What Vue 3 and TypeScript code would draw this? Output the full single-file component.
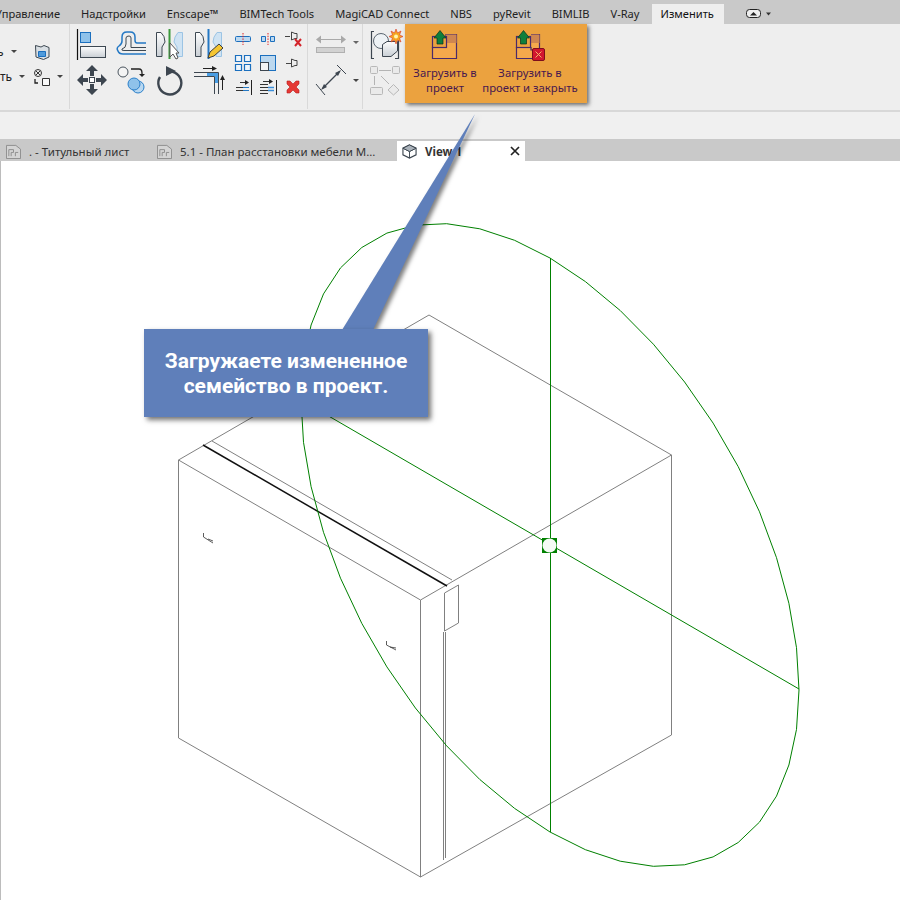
<template>
  <div class="app">
    <div class="menu-bar">
      <span
        v-for="tab in menuTabs"
        :key="tab"
        class="menu-bar__tab"
        :class="{ 'menu-bar__tab--active': tab === 'Изменить' }"
      >{{ tab }}</span>
      <svg class="menu-bar__toggle" viewBox="0 0 26 10">
        <rect x="0.5" y="0.5" width="14" height="8" rx="3" fill="#eee" stroke="#222" />
        <path d="M4 6.5 7.5 3 11 6.5Z" fill="#222" />
        <path d="M20 3.5h5l-2.5 3Z" fill="#333" />
      </svg>
    </div>

    <div class="ribbon">
      <div class="group group--start">
        <div class="start-row start-row--one">
          <span class="start-row__label start-row__label--one">ь</span>
          <i class="caret"></i>
          <svg class="start-row__icon" viewBox="34 42 16 16">
            <path d="M35.500 43.500 41 45 44 43.500 49 45.500V55L43.500 57.500 36 55Z" fill="#d9dfe4" stroke="#3d4852" />
            <path d="M38.500 49.500H45.500V54.500H38.500Z" fill="#4f9bdc" stroke="#1b6fbe" />
          </svg>
        </div>
        <div class="start-row start-row--two">
          <span class="start-row__label start-row__label--two">ть</span>
          <i class="caret"></i>
          <svg class="start-row__icon start-row__icon--wide" viewBox="33 66 18 18">
            <circle cx="38" cy="71" r="3.500" fill="#eee" stroke="#333" />
            <path d="M36 69 40 73M40 69 36 73" stroke="#333" />
            <path d="M35 77V81H38" fill="none" stroke="#222" stroke-width="1.300" />
            <path d="M42.500 76.500H49.500V83.500H42.500Z" fill="#fafafa" stroke="#333" />
          </svg>
          <i class="caret"></i>
        </div>
      </div>

      <div class="group group--modify">
        <div class="large-grid">
          <svg class="lg" viewBox="76 28 39 35">
            <defs>
              <linearGradient id="steel" x1="0" y1="0" x2="0" y2="1">
                <stop offset="0" stop-color="#fdfdfd" />
                <stop offset="1" stop-color="#c9cfd5" />
              </linearGradient>
            </defs>
            <path d="M77.500 29V60" stroke="#111" stroke-width="1.200" />
            <rect x="80.500" y="32.500" width="10" height="10" fill="#8fc2ea" stroke="#1b6fbe" />
            <rect x="80.500" y="46.500" width="25" height="11" fill="url(#steel)" stroke="#3d4852" />
          </svg>
          <svg class="lg" viewBox="115 28 39 35">
            <path d="M146 43H137Q135 43 135 40V37Q135 32 130 32H127Q122 32 122 37V41Q122 44 119 46Q116 48 118 51Q119 54 123 54H146" fill="none" stroke="#2478c4" stroke-width="1.500" />
            <path d="M146 47.500H131V38Q131 36 129 36Q126 36 126 38V44Q126 48 122 49Q121 50.500 124 50.500H146" fill="none" stroke="#3d4852" />
          </svg>
          <svg class="lg" viewBox="154 28 39 35">
            <path d="M156.500 32.500H161Q165 36 165 42L162 47V56.500H156.500Z" fill="url(#steel)" stroke="#3d4852" />
            <path d="M169.500 29V59" stroke="#3c9a3c" stroke-width="2" />
            <path d="M182.500 32.500H178Q174 37 174 42L177 47V56.500H182.500Z" fill="#cfe3f3" stroke="#9cc4e4" />
            <path d="M170 43V57L173 54 176 59 178 58 176 53H179Z" fill="#fff" stroke="#555" />
          </svg>
          <svg class="lg" viewBox="193 28 39 35">
            <path d="M195.500 32.500H200Q204 36 204 42L201 47V56.500H195.500Z" fill="url(#steel)" stroke="#3d4852" />
            <path d="M208.500 29V59" stroke="#2478c4" stroke-width="2" />
            <path d="M221.500 32.500H217Q213 37 213 42L216 47V56.500H221.500Z" fill="#cfe3f3" stroke="#9cc4e4" />
            <path d="M208 58 210 52 219 44 223 48 214 56Z" fill="#f4c531" stroke="#3d3d3d" />
          </svg>
          <svg class="lg" viewBox="76 63 39 35">
            <path d="M92 65 98 71H94V76H90V71H86ZM92 95 86 89H90V84H94V89H98ZM77 80 83 74V78H88V82H83V86ZM107 80 101 86V82H96V78H101V74Z" fill="#3d4650" />
            <rect x="89.500" y="77.500" width="5" height="5" fill="#fff" stroke="#3d4650" />
          </svg>
          <svg class="lg" viewBox="115 63 39 35">
            <circle cx="123" cy="72" r="5" fill="#f4f4f4" stroke="#4a545e" />
            <path d="M131 69H139Q142 69 142 73V75" fill="none" stroke="#222" stroke-width="1.300" />
            <path d="M139 74H145L142 77Z" fill="#222" />
            <circle cx="138" cy="87" r="6" fill="#b9d8f1" stroke="#2a7fc9" />
            <circle cx="134" cy="84" r="6" fill="#8fc2ea" stroke="#2a7fc9" />
          </svg>
          <svg class="lg" viewBox="154 63 39 35">
            <path d="M170 71.500A11.500 11.500 0 1 1 160 77" fill="none" stroke="#3d4650" stroke-width="2.400" />
            <path d="M166 66 176 71 166 76Z" fill="#3d4650" />
          </svg>
          <svg class="lg" viewBox="193 63 39 35">
            <path d="M194 72.500H218.500V94M194 76.500H214.500V94" fill="none" stroke="#3d4650" />
            <path d="M203 68.500H213M222.500 90V79" stroke="#222" />
            <path d="M212 66 217 68.500 212 71ZM220 80 222.500 75 225 80Z" fill="#222" />
            <path d="M207 74.500H216.500V83" fill="none" stroke="#4a9ee4" stroke-width="3" />
          </svg>
        </div>
        <div class="small-grid">
          <svg class="sm" viewBox="232 27 25 24">
            <rect x="235.500" y="36.500" width="15" height="5" rx="1" fill="#bcd8ef" stroke="#1b6fbe" />
            <path d="M243 33V45" stroke="#d22" stroke-dasharray="1.500 1.200" />
          </svg>
          <svg class="sm" viewBox="257 27 25 24">
            <path d="M261.500 36.500H265.500V41.500H261.500ZM270.500 36.500H274.500V41.500H270.500Z" fill="#bcd8ef" stroke="#1b6fbe" />
            <path d="M268 33V45" stroke="#d22" stroke-dasharray="1.500 1.200" />
          </svg>
          <svg class="sm" viewBox="282 27 25 24">
            <path d="M285 36.500H290M291.500 32 295 33.500H297V38.500H295L291.500 40Z" fill="#eee" stroke="#444" />
            <path d="M295 39 301 46M301 39 295 46" stroke="#d3232a" stroke-width="2" />
          </svg>
          <svg class="sm" viewBox="232 51 25 24">
            <path d="M235.500 55.500H241.500V61.500H235.500ZM244.500 55.500H250.500V61.500H244.500ZM235.500 64.500H241.500V70.500H235.500ZM244.500 64.500H250.500V70.500H244.500Z" fill="#eef5fb" stroke="#1b6fbe" stroke-width="1.200" />
          </svg>
          <svg class="sm" viewBox="257 51 25 24">
            <rect x="260.500" y="55.500" width="15" height="15" fill="#bcd8ef" stroke="#1b6fbe" />
            <rect x="260.500" y="62.500" width="8" height="8" fill="#f4f4f4" stroke="#3d4650" />
          </svg>
          <svg class="sm" viewBox="282 51 25 24">
            <path d="M286 63.500H291M291.500 59 295 60.500H297V65.500H295L291.500 67Z" fill="#eee" stroke="#444" />
          </svg>
          <svg class="sm" viewBox="232 75 25 24">
            <path d="M236 87.500H243M236 90.500H243M240 82.500H246" stroke="#333" />
            <path d="M243 87.500H249M243 90.500H249" stroke="#2478c4" />
            <path d="M245 80 249 82.500 245 85Z" fill="#222" />
            <path d="M251.500 80V95" stroke="#222" />
          </svg>
          <svg class="sm" viewBox="257 75 25 24">
            <path d="M260 84.500H268M260 87.500H268M260 90.500H268M260 93.500H268M263 81.500H270" stroke="#333" />
            <path d="M268 87.500H274M268 90.500H274" stroke="#3a8fdc" stroke-width="1.500" />
            <path d="M269 79 273 81.500 269 84Z" fill="#222" />
            <path d="M276.500 80V95" stroke="#222" />
          </svg>
          <svg class="sm" viewBox="282 75 25 24">
            <path d="M287 81H290L293 84 296 81H299V84L296 87 299 90V93H296L293 90 290 93H287V90L290 87 287 84Z" fill="#e53935" stroke="#b71c1c" stroke-width="0.600" />
          </svg>
        </div>
      </div>

      <div class="group group--measure">
        <div class="measure-row">
          <svg class="measure-row__icon" viewBox="314 30 33 24">
            <path d="M317 39.500H343" stroke="#a9a9a9" />
            <path d="M315 39.500 320 35.500V43.500ZM345 39.500 340 35.500V43.500Z" fill="#a9a9a9" />
            <rect x="315.500" y="47.500" width="28" height="5" fill="#d2d2d2" stroke="#b0b0b0" />
          </svg>
          <i class="caret caret--dim"></i>
        </div>
        <div class="measure-row">
          <svg class="measure-row__icon" viewBox="314 64 33 32">
            <path d="M322 88 338 72" stroke="#3d4650" stroke-width="1.200" />
            <path d="M320 90 323 84 326 87ZM340 70 334 73 337 76Z" fill="#3d4650" />
            <path d="M315 84 324 95M336 65 345 74" stroke="#3d4650" />
          </svg>
          <i class="caret"></i>
        </div>
      </div>

      <div class="group group--create">
        <svg class="create-icon" viewBox="369 28 34 34">
          <path d="M374 31.500H371.500V58.500H374M398.500 38V58.500H395" fill="none" stroke="#3d4650" stroke-width="1.200" />
          <circle cx="381" cy="41" r="7.500" fill="#eef2f5" stroke="#5b6670" />
          <path d="M382.500 44.500 387 41.500H397.500V51L391 56.500H382.500Z" fill="url(#steel)" stroke="#3d4650" />
          <path d="M396 29 397.500 33 401 31 399.500 35 403 36.500 399.500 38 401 42 397.500 40 396 44 394.500 40 391 42 392.500 38 389 36.500 392.500 35 391 31 394.500 33Z" fill="#f6a821" stroke="#d9362b" stroke-width="0.600" />
          <circle cx="396" cy="36.500" r="2" fill="#fff7b0" />
        </svg>
        <svg class="create-icon" viewBox="369 63 34 34">
          <g fill="#eaeaea" stroke="#b8b8b8">
            <rect x="370.500" y="66.500" width="7" height="7" rx="1" />
            <rect x="392.500" y="66.500" width="7" height="7" rx="1" />
            <rect x="370.500" y="87.500" width="12" height="7" rx="1" />
            <path d="M393.500 84.500 399 90 393.500 95 388 90Z" />
          </g>
          <path d="M379 70.500H391M374.500 76V85M381 76 389 84" stroke="#b4b4b4" />
        </svg>
      </div>

      <div class="load-panel">
        <button class="load-btn load-btn--first">
          <svg class="load-btn__icon" viewBox="430 30 30 31">
            <path d="M446 34.500H456.500V58.500H432.500V47.500H446Z" fill="#f5a94c" stroke="#4a2a6a" stroke-width="1.200" />
            <path d="M446 34.500H456.500V43H446Z" fill="#cf8650" />
            <rect x="432.500" y="36.500" width="14" height="11" fill="#eba23f" stroke="#4a2a6a" stroke-width="1.200" />
            <path d="M440 30.500 446 38H443V44H437V38H434Z" fill="#0f7f3c" stroke="#08321c" stroke-width="0.700" />
          </svg>
          <span>Загрузить в<br />проект</span>
        </button>
        <button class="load-btn load-btn--second">
          <svg class="load-btn__icon" viewBox="514 30 33 33">
            <path d="M531 34.500H539.500V50H531V47.500H516.500V58.500H533" fill="#f5a94c" stroke="#4a2a6a" stroke-width="1.200" />
            <path d="M531 34.500H539.500V43H531Z" fill="#cf8650" />
            <rect x="516.500" y="36.500" width="14" height="11" fill="#eba23f" stroke="#4a2a6a" stroke-width="1.200" />
            <path d="M523.500 30.500 529.500 38H526.500V44H520.500V38H517.500Z" fill="#0f7f3c" stroke="#08321c" stroke-width="0.700" />
            <rect x="532.500" y="48.500" width="12" height="12" rx="1.500" fill="#d2152f" stroke="#7d0d1c" />
            <path d="M535.500 51.500 541.500 57.500M541.500 51.500 535.500 57.500" stroke="#f4b26a" />
          </svg>
          <span>Загрузить в<br />проект и закрыть</span>
        </button>
      </div>
    </div>

    <div class="spacer"></div>

    <div class="view-tabs">
      <div v-for="sheet in sheetTabs" :key="sheet.title" class="view-tab" :style="{ width: sheet.width + 'px' }">
        <svg class="view-tab__icon" viewBox="0 0 16 16">
          <path d="M.5 1.500H10.500L15.500 5.500V15.500H.5Z" fill="#d4d4d4" stroke="#8c8c8c" />
          <path d="M3 13V6H8V9H5.500V13M10 13V9H13" fill="none" stroke="#8c8c8c" />
        </svg>
        <span>{{ sheet.title }}</span>
      </div>
      <div class="view-tab view-tab--active">
        <svg class="view-tab__icon" viewBox="0 0 16 16">
          <path d="M8 1 15 4.500V11.500L8 15 1 11.500V4.500Z" fill="#fff" stroke="#3d4650" stroke-width="1.200" />
          <path d="M1 4.500 8 8 15 4.500M8 8V15" fill="none" stroke="#3d4650" />
          <path d="M8 1 15 4.500 8 8 1 4.500Z" fill="#aab2ba" stroke="#3d4650" />
        </svg>
        <b>View 1</b>
        <svg class="view-tab__close" viewBox="0 0 10 10">
          <path d="M1 1 9 9M9 1 1 9" stroke="#222" stroke-width="1.700" />
        </svg>
      </div>
    </div>

    <div class="canvas">
      <svg class="canvas__drawing" viewBox="0 161 900 739">
        <polyline
          v-for="line in grayLines"
          :key="line"
          :points="line"
          fill="none"
          stroke="#808080"
        />
        <path d="M203 445 447 586" stroke="#111" stroke-width="1.500" />
        <path d="M203.500 533V537L213 543M208 539 213 541M386.500 641V645L396 650M390 647 396 648" fill="none" stroke="#333" stroke-width="0.800" />
        <polygon :points="ellipsePoints" fill="none" stroke="#008000" />
        <path d="M301 400 799 689M550.500 258V832" stroke="#008000" />
        <rect x="542" y="538" width="15" height="15" fill="#008000" />
        <circle cx="549.500" cy="545.500" r="7" fill="#f4fbf4" />
      </svg>
    </div>

    <svg class="pointer" viewBox="0 0 900 900">
      <polygon points="475,114 342,330 373,330" fill="#5f7fba" />
    </svg>
    <div class="callout">Загружаете измененное<br />семейство в проект.</div>
  </div>
</template>

<script setup lang="ts">
const menuTabs: string[] = [
  'Управление',
  'Надстройки',
  'Enscape™',
  'BIMTech Tools',
  'MagiCAD Connect',
  'NBS',
  'pyRevit',
  'BIMLIB',
  'V-Ray',
  'Изменить',
];

const sheetTabs = [
  { title: '. - Титульный лист', width: 151 },
  { title: '5.1 - План расстановки мебели М...', width: 246 },
];

const grayLines: string[] = [
  '429,315 671.500,455 420.500,600 178.500,460 429,315',
  '178.500,460 178.500,738 420.500,877 671.500,735 671.500,455',
  '420.500,600 420.500,877',
  '212,441 452,580',
  '444.500,593 458.500,585 458.500,623 444.500,631 444.500,593',
  '443.500,632 443.500,860',
  '445.500,632 445.500,858',
];

// the work plane circle, seen in isometric view
const segments = 44;
const ellipsePoints = Array.from({ length: segments }, (_, i) => {
  const t = (i / segments) * Math.PI * 2;
  const x = 550 + 249 * Math.cos(t);
  const y = 545 + 145 * Math.cos(t) - 287 * Math.sin(t);
  return `${x.toFixed(1)},${y.toFixed(1)}`;
}).join(' ');
</script>

<style>
html,
body {
  background: #fff;
}
</style>

<style scoped>
.app {
  position: relative;
  width: 900px;
  height: 900px;
  overflow: hidden;
  display: flex;
  flex-direction: column;
  font-family: "Noto Sans", "Open Sans", sans-serif;
  color: #222;
}

.menu-bar {
  height: 24px;
  flex-shrink: 0;
  background: #c9c9c9;
  display: flex;
  align-items: flex-end;
  font-size: 11.1px;
  margin-left: -14px;
  width: 914px;
}

.menu-bar__tab {
  height: 20px;
  line-height: 19px;
  padding: 0 9px;
  margin-right: 3px;
  white-space: nowrap;
}

.menu-bar__tab--active {
  background: #eee;
  color: #111;
  margin-right: 0;
  min-width: 54px;
}

.menu-bar__toggle {
  width: 26px;
  height: 10px;
  margin: 0 0 5px 22px;
}

.ribbon {
  height: 88px;
  flex-shrink: 0;
  box-sizing: border-box;
  background: #eee;
  border-bottom: 2px solid #d8d8d8;
  display: flex;
}

.group {
  height: 85px;
  border-right: 1px solid #d9d9d9;
}

.group--start {
  width: 69px;
  display: flex;
  flex-direction: column;
  overflow: hidden;
  font-size: 12px;
}

.start-row {
  height: 25px;
  display: flex;
  align-items: center;
}

.start-row--one {
  margin-top: 15px;
}

.start-row__label {
  overflow: hidden;
  white-space: nowrap;
  line-height: 16px;
}

.start-row__label--one {
  width: 10px;
  margin-left: -3px;
  margin-right: 4px;
}

.start-row__label--two {
  width: 16px;
}

.start-row__icon {
  width: 16px;
  height: 16px;
  margin-left: 17px;
}

.start-row--two .caret {
  margin-left: 3px;
}

.start-row__icon--wide {
  width: 18px;
  height: 18px;
  margin-left: 8px;
}

.start-row--two .caret:last-child {
  margin-left: 6px;
}

.caret {
  display: inline-block;
  width: 0;
  height: 0;
  border-left: 3px solid transparent;
  border-right: 3px solid transparent;
  border-top: 3px solid #444;
  flex-shrink: 0;
}

.caret--dim {
  border-top-color: #666;
}

.group--modify {
  box-sizing: border-box;
  width: 238px;
  padding-left: 6px;
  display: flex;
}

.large-grid {
  display: grid;
  grid-template-columns: repeat(4, 39px);
  grid-auto-rows: 35px;
  margin-top: 4px;
}

.small-grid {
  display: grid;
  grid-template-columns: repeat(3, 25px);
  grid-auto-rows: 24px;
  margin-top: 3px;
}

.lg {
  width: 39px;
  height: 35px;
}

.sm {
  width: 25px;
  height: 24px;
}

.group--measure {
  width: 55px;
  padding-left: 7px;
  box-sizing: border-box;
}

.measure-row {
  display: flex;
  align-items: center;
  gap: 5px;
}

.measure-row:first-child {
  margin-top: 6px;
  height: 24px;
}

.measure-row:last-child {
  margin-top: 10px;
  height: 32px;
}

.measure-row__icon {
  width: 33px;
  height: 100%;
}

.group--create {
  width: 42px;
  border-right: none;
  padding: 4px 0 0 6px;
  box-sizing: border-box;
  display: flex;
  flex-direction: column;
  gap: 1px;
}

.create-icon {
  width: 34px;
  height: 34px;
}

.load-panel {
  width: 182px;
  height: 79px;
  background: #eba23f;
  box-shadow: 2px 2px 4px rgba(0, 0, 0, 0.55);
  display: flex;
  position: relative;
}

.load-btn {
  border: 0;
  background: none;
  padding: 6px 0 0;
  display: flex;
  flex-direction: column;
  align-items: center;
  font: inherit;
  font-size: 11.3px;
  line-height: 15px;
  color: #47184f;
  white-space: nowrap;
}

.load-btn--first {
  width: 80px;
}

.load-btn--second {
  width: 90px;
}

.load-btn__icon {
  width: 30px;
  height: 31px;
  margin-bottom: 4px;
}

.load-btn--second .load-btn__icon {
  width: 33px;
  height: 33px;
  margin-bottom: 2px;
}

.spacer {
  height: 27px;
  flex-shrink: 0;
  background: #f0f0f0;
}

.view-tabs {
  height: 22px;
  flex-shrink: 0;
  background: #c9c9c9;
  display: flex;
  align-items: flex-end;
  font-size: 11.5px;
  color: #333;
}

.view-tab {
  height: 20px;
  box-sizing: border-box;
  padding-left: 6px;
  display: flex;
  align-items: center;
  gap: 8px;
  white-space: nowrap;
}

.view-tab__icon {
  width: 15px;
  height: 15px;
  flex-shrink: 0;
}

.view-tab--active {
  width: 128px;
  background: #fff;
  padding-left: 5px;
}

.view-tab--active b {
  font-weight: 700;
}

.view-tab__close {
  width: 10px;
  height: 10px;
  margin-left: auto;
  margin-right: 5px;
}

.canvas {
  flex: 1;
  position: relative;
  background: #fff;
  border-left: 1px solid #bcbcbc;
}

.canvas__drawing {
  position: absolute;
  left: -1px;
  top: 0;
  width: 900px;
  height: 739px;
}

.pointer {
  position: absolute;
  left: 0;
  top: 0;
  width: 900px;
  height: 900px;
  pointer-events: none;
  filter: drop-shadow(3px 2px 2px rgba(0, 0, 0, 0.5));
}

.callout {
  position: absolute;
  left: 144px;
  top: 329px;
  width: 284px;
  height: 88px;
  box-sizing: border-box;
  padding-top: 2px;
  display: flex;
  align-items: center;
  justify-content: center;
  text-align: center;
  background: #5f7fba;
  box-shadow: 3px 3px 5px rgba(0, 0, 0, 0.55);
  color: #fff;
  font-family: Roboto, "Noto Sans", sans-serif;
  font-size: 21px;
  font-weight: 700;
  line-height: 25px;
}
</style>
